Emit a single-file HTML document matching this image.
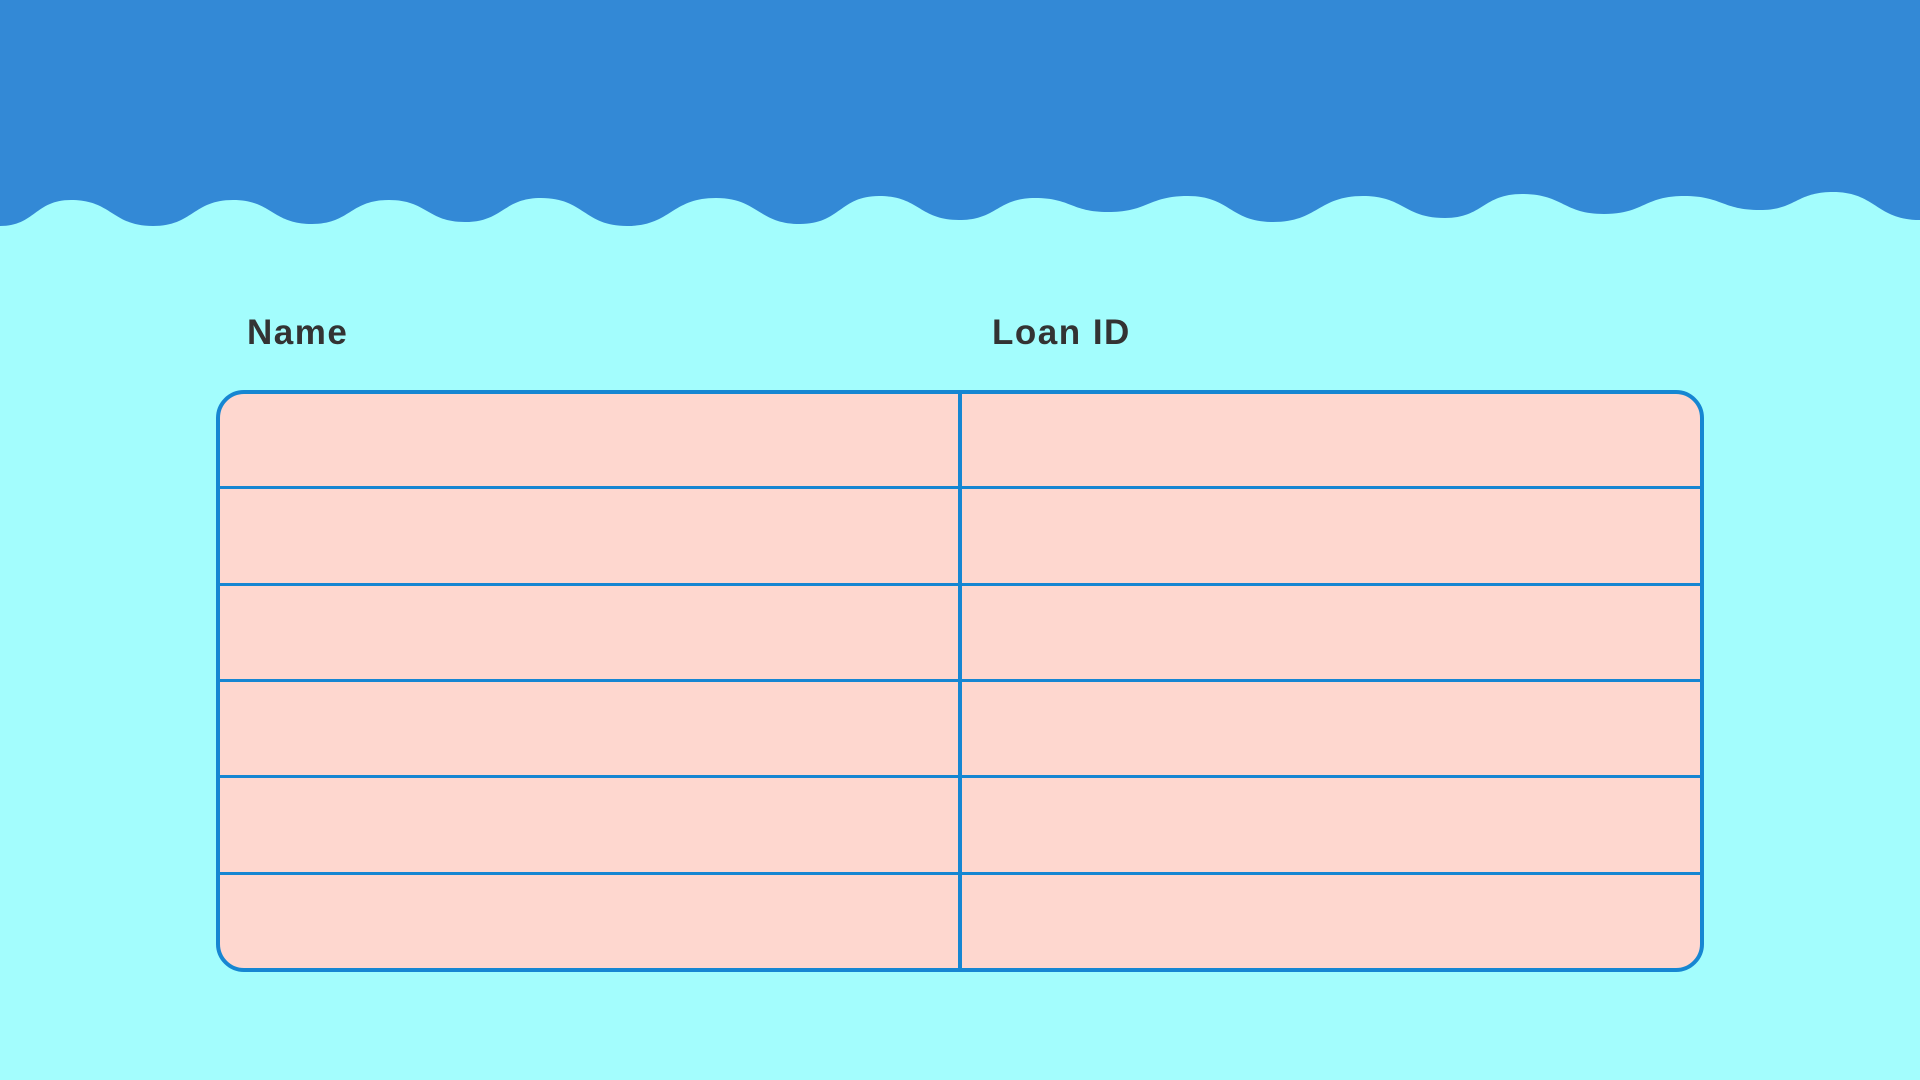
<!DOCTYPE html>
<html><head><meta charset="utf-8"><style>
html,body{margin:0;padding:0;width:1920px;height:1080px;overflow:hidden;background:#a3fdfd;}
.t{position:absolute;font-family:"Liberation Sans",sans-serif;font-weight:bold;font-size:35px;color:#333;letter-spacing:1.5px;line-height:1;}
.tb{position:absolute;left:216px;top:390px;width:1480px;height:574px;border:4px solid #1686d2;border-radius:28px;background:#fed7cf;}
.h{position:absolute;left:0;width:1480px;height:3px;background:#1686d2;}
.v{position:absolute;top:0;left:738px;width:4px;height:574px;background:#1686d2;}
</style></head><body>
<svg width="1920" height="1080" style="position:absolute;left:0;top:0">
<path fill="#3389d6" d="M0,0 H1920 V220 C1876,220 1876,192 1833,192 C1796,192 1796,210 1760,210 C1722,210 1722,196 1684,196 C1644,196 1644,214 1604,214 C1563,214 1563,194 1522,194 C1483,194 1483,218 1445,218 C1404,218 1404,196 1363,196 C1318,196 1318,222 1273,222 C1230,222 1230,196 1188,196 C1148,196 1148,212 1108,212 C1071,212 1071,198 1035,198 C997,198 997,220 959,220 C919,220 919,196 879,196 C840,196 840,224 800,224 C758,224 758,198 716,198 C671,198 671,226 627,226 C584,226 584,198 541,198 C503,198 503,222 465,222 C427,222 427,200 389,200 C350,200 350,224 312,224 C272,224 272,200 233,200 C193,200 193,226 153,226 C112,226 112,200 71,200 C35,200 35,226 0,226 Z"/>
</svg>
<div class="t" style="left:247px;top:315px">Name</div>
<div class="t" style="left:992px;top:315px">Loan ID</div>
<div class="tb">
<div class="h" style="top:92px"></div>
<div class="h" style="top:189px"></div>
<div class="h" style="top:285px"></div>
<div class="h" style="top:381px"></div>
<div class="h" style="top:478px"></div>
<div class="v"></div>
</div>
</body></html>
